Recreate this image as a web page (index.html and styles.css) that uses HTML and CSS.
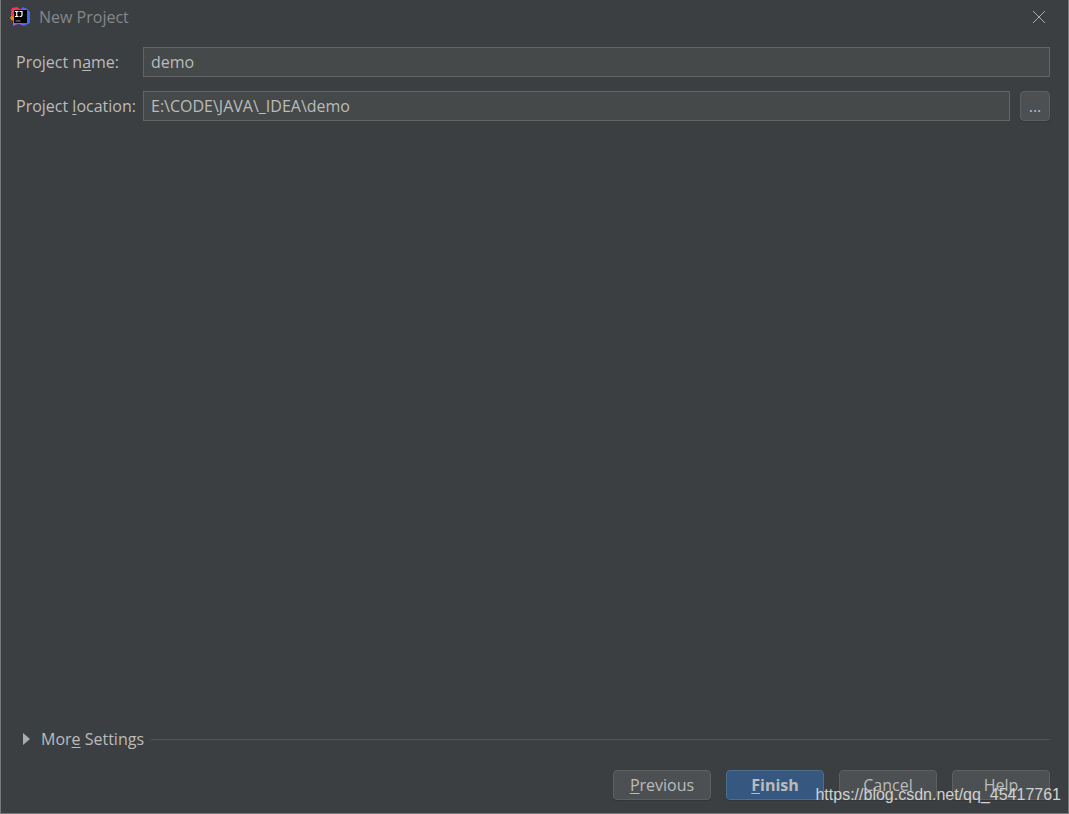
FILE: index.html
```html
<!DOCTYPE html>
<html lang="en">
<head>
<meta charset="utf-8">
<title>New Project</title>
<link rel="stylesheet" href="styles.css">
</head>
<body>
<main class="dialog">
  <header class="titlebar">
    <svg class="logo" viewBox="0 0 20 20" aria-hidden="true">
      <path d="M1 4 2 1 7 0 11 3 8 12 1 11Z" fill="#fe315d"/>
      <path d="M0 10 5 8 5 14 1 13Z" fill="#f97a12"/>
      <path d="M11 2 16 1 20 5 20 16 14 19 8 16Z" fill="#3b6cf0"/>
      <path d="M10 3 13 0 17 3 12 6Z" fill="#6b57ff"/>
      <path d="M3 13 9 14 14 18 8 17 3 19Z" fill="#b74af7"/>
      <path d="M4 3h13v13H4z" fill="#000"/>
      <path d="M5 4.500h3.500M6.750 4.500v5M5 9.500h3.500M9.500 4.500h3M12 4.500v3.600q0 1.400-1.400 1.400H9.500" fill="none" stroke="#fff" stroke-width="1.200"/>
      <path d="M5.500 14h5" stroke="#999" stroke-width="1"/>
    </svg>
    <h1 class="title">New Project</h1>
    <button class="close" type="button" aria-label="Close">
      <svg viewBox="0 0 12 12" aria-hidden="true"><path d="M0 0 12 12M12 0 0 12"/></svg>
    </button>
  </header>
  <form class="form">
    <div class="row">
      <label class="label" for="name">Project n<u>a</u>me:</label>
      <input class="field" id="name" type="text" value="demo">
    </div>
    <div class="row">
      <label class="label" for="location">Project <u>l</u>ocation:</label>
      <input class="field" id="location" type="text" value="E:\CODE\JAVA\_IDEA\demo">
      <button class="button browse" type="button">...</button>
    </div>
  </form>
  <div class="more">
    <button class="toggle" type="button" aria-expanded="false">
      <svg class="arrow" viewBox="0 0 7 12" aria-hidden="true"><path d="M0 0 7 6 0 12Z"/></svg>
      <span>Mor<u>e</u> Settings</span>
    </button>
    <hr class="rule">
  </div>
  <footer class="actions">
    <button class="button action" type="button"><u>P</u>revious</button>
    <button class="button action primary" type="submit"><u>F</u>inish</button>
    <button class="button action" type="button">Cancel</button>
    <button class="button action" type="button">Help</button>
  </footer>
  <span class="watermark">https://blog.csdn.net/qq_45417761</span>
</main>
</body>
</html>
```
FILE: styles.css
```css
* {
  box-sizing: border-box;
}

body {
  margin: 0;
  background: #3c3f41;
  color: #bbbbbb;
  font: 16px/22px "Open Sans", "Noto Sans", sans-serif;
}

button,
input {
  font: inherit;
  color: inherit;
}

u {
  text-decoration-thickness: 1px;
  text-underline-offset: 2px;
}

.dialog {
  position: relative;
  display: flex;
  flex-direction: column;
  min-height: 100vh;
  padding: 0 18px 13px 15px;
  border: solid #77797a;
  border-width: 0 1px 1px;
}

.titlebar {
  display: flex;
  align-items: center;
  height: 34px;
  margin-left: -6px;
}

.logo {
  width: 20px;
  height: 20px;
}

.title {
  flex: 1;
  margin: 0 0 0 9px;
  font-size: 16px;
  font-weight: 400;
  color: #85878a;
}

.close {
  display: flex;
  padding: 4px;
  margin-right: 1px;
  border: 0;
  background: none;
}

.close svg {
  width: 12px;
  height: 12px;
  fill: none;
  stroke: #a8aaab;
}

.form {
  display: flex;
  flex: 1;
  flex-direction: column;
  gap: 14px;
  padding-top: 13px;
}

.row {
  display: flex;
  align-items: center;
}

.label {
  width: 127px;
}

.field {
  flex: 1;
  min-width: 0;
  height: 30px;
  padding: 0 7px;
  border: 1px solid #646464;
  background: #45494a;
}

.button {
  height: 30px;
  padding: 0;
  border: 1px solid #5e6060;
  border-radius: 4px;
  background: #4c5052;
  box-shadow: 0 1px 1px #333638;
}

.browse {
  width: 30px;
  margin-left: 10px;
}

.more {
  display: flex;
  align-items: center;
  gap: 7px;
}

.toggle {
  display: flex;
  align-items: center;
  gap: 11px;
  padding: 0 0 0 7px;
  border: 0;
  background: none;
}

.arrow {
  width: 7px;
  height: 12px;
  fill: #adadad;
}

.rule {
  flex: 1;
  height: 1px;
  margin: 0;
  border: 0;
  background: #515456;
}

.actions {
  display: flex;
  justify-content: flex-end;
  gap: 15px;
  margin-top: 20px;
}

.action {
  width: 98px;
}

.primary {
  border-color: #4c708c;
  background: #365880;
  font-weight: 700;
}

.watermark {
  position: absolute;
  right: 7px;
  bottom: 7px;
  color: #d0d1d1;
  font: 16px/22px "Liberation Sans", sans-serif;
}
```
